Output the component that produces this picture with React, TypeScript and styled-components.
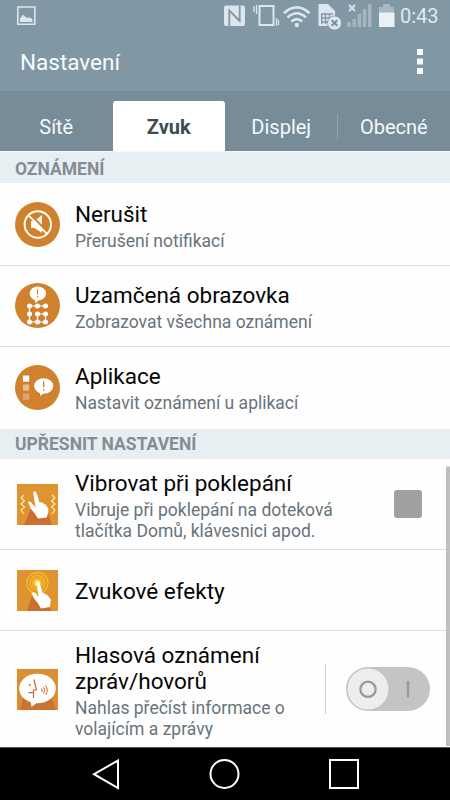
import React from 'react';
import styled, { createGlobalStyle } from 'styled-components';

const GlobalStyle = createGlobalStyle`
  * { box-sizing: border-box; }
  body { margin: 0; background: #fff; font-family: Roboto, sans-serif; }
  svg { display: block; flex: none; }
`;

const Screen = styled.div`
  width: 450px; height: 800px; overflow: hidden;
  display: flex; flex-direction: column; background: #fefefe;
`;
const StatusBar = styled.header`
  height: 32px; flex: none; padding: 0 12px 0 16px; background: #8197a4;
  display: flex; align-items: center; justify-content: space-between;
`;
const StatusIcons = styled.div`
  display: flex; align-items: center; height: 32px;
`;
const Clock = styled.span`
  width: 38px; font-size: 20px; line-height: 32px; color: #e0e9ee; white-space: nowrap;
`;
const TitleBar = styled.div`
  height: 59px; flex: none; padding: 0 26px 0 20px; background: #8197a4;
  display: flex; align-items: center; justify-content: space-between;
`;
const Title = styled.h1`
  margin: 0; font-size: 22.5px; line-height: 30px; font-weight: 400; color: #f7fcfe;
`;
const MenuButton = styled.button`
  border: 0; padding: 0; background: none; height: 30px;
`;
const Tabs = styled.nav`
  height: 61px; flex: none; padding-top: 10px; background: #778c96;
  border-bottom: 1px solid #f7fafb; display: grid; grid-template-columns: 112.5px 112.5px 112.5px 112.5px;
`;
const Tab = styled.div<{ $active?: boolean; $divided?: boolean }>`
  position: relative; height: 50px; border-radius: 3px 3px 0 0; padding-top: 1px;
  background: ${p => (p.$active ? '#fff' : 'transparent')};
  color: ${p => (p.$active ? '#3e4c56' : '#f3f9fb')};
  font-size: 20px; font-weight: ${p => (p.$active ? 700 : 400)};
  display: flex; align-items: center; justify-content: center;
  &::before {
    content: ''; display: ${p => (p.$divided ? 'block' : 'none')};
    position: absolute; left: -1px; top: 13px; width: 1px; height: 25px; background: #94a5ad;
  }
`;
const SectionHeader = styled.h2<{ $height: number; $inset: number }>`
  height: ${p => p.$height}px; flex: none; margin: 0; padding: ${p => p.$inset}px 0 0 15px; background: #e8eff3;
  font-size: 17.5px; line-height: 20px; font-weight: 700; color: #858c94;
`;
const Row = styled.section<{ $height: number; $last?: boolean }>`
  height: ${p => p.$height}px; flex: none; display: flex; align-items: center;
  border-bottom: ${p => (p.$last ? '0' : '1px solid #dadcdd')};
`;
const IconSlot = styled.div<{ $lift?: number }>`
  width: 75px; flex: none; display: flex; justify-content: center; padding-bottom: ${p => p.$lift ?? 0}px;
`;
const Copy = styled.div<{ $shift?: number }>`
  flex: 1; white-space: nowrap; padding-top: ${p => p.$shift ?? 0}px;
`;
const Name = styled.div`
  font-size: 22.5px; line-height: 26px; color: #060606;
`;
const Detail = styled.div`
  margin-top: 4px; font-size: 17.5px; line-height: 21px; color: #68737b;
`;
const Checkbox = styled.div`
  width: 28px; height: 28px; margin-right: 28px; border-radius: 3px; background: #a0a0a0;
`;
const SwitchArea = styled.div`
  height: 50px; width: 125px; border-left: 1px solid #cfcfcf; padding-left: 20px;
  display: flex; align-items: center;
`;
const Body = styled.main`
  position: relative; height: 595px; flex: none; overflow: hidden;
`;
const Scrollbar = styled.div`
  position: absolute; right: 0; top: 314px; bottom: 1px; width: 4px; border-radius: 2px 2px 0 0; background: #bfbfbf;
`;
const NavBar = styled.footer`
  height: 53px; flex: none; background: #000; border-top: 1px solid #555;
  display: flex; justify-content: center; align-items: center; gap: 87px; padding-right: 1px;
`;

const PictureIcon = () => (
  <svg width="20" height="20" viewBox="0 0 20 20">
    <path d="M1.8 1H18.8V18.2H1.8Z" fill="none" stroke="#dbe6ed" strokeWidth="1.6" />
    <path d="M4 16V12.5Q4.2 11.2 5.5 11.2Q5.8 9 7.2 9Q8.7 9 9.3 11Q10.8 10.9 11 12Q12.5 10.6 14 11.7Q16.5 12 16.5 14V16Z" fill="#dbe6ed" />
  </svg>
);

const SystemIcons = () => (
  <svg width="178" height="32" viewBox="222 0 178 32" fill="none" stroke="#dbe6ed">
    <path fill="#dbe6ed" stroke="none" d="M226 5.5H243Q245 5.5 245 7.5V24Q245 26 243 26H226Q224 26 224 24V7.5Q224 5.5 226 5.5Z" />
    <path d="M229.3 26V10.5L239.7 21V5.5" stroke="#8197a4" strokeWidth="1.8" />
    <path d="M259.5 6H273.5V25H259.5Z" strokeWidth="2" />
    <path d="M254 6V12M256.5 5V14M276.5 18V26M278.5 20V25" strokeWidth="1.3" />
    <path d="M284 13.2Q296.8 1.5 309.5 13.2M287.5 17.5Q296.8 9 306 17.5M291.3 21.5Q296.8 16.7 302.2 21.5" strokeWidth="2.6" />
    <circle cx="296.8" cy="25" r="2.2" fill="#dbe6ed" stroke="none" />
    <path d="M318.5 4H328L335 11V26H318.5Z" fill="#dbe6ed" stroke="none" />
    <path d="M321.5 14H333M321.5 18H333M321.5 22H329M321.7 13.5V24M325.5 14V24M329.5 14V24" stroke="#8197a4" strokeWidth="1.3" />
    <circle cx="334.5" cy="23" r="7" fill="#dbe6ed" stroke="#8197a4" strokeWidth="0.8" />
    <path d="M331.7 20.2L337.3 25.8M337.3 20.2L331.7 25.8" stroke="#778d99" strokeWidth="2" />
    <path d="M349 5L355 11M355 5L349 11" strokeWidth="1.8" />
    <path d="M349 22V27M354.2 19V27M359.4 14V27M364.6 9V27M369.8 4V27" stroke="#a4b5bf" strokeWidth="3.6" />
    <path d="M383 4H390V7H394V13H379V7H383Z" fill="#a7b8c2" stroke="none" />
    <path d="M379 12.5H394.5V27H379Z" fill="#e9f1f5" stroke="none" />
  </svg>
);

const MuteIcon = () => (
  <svg width="45" height="45" viewBox="0.5 0.5 45 45" fill="none" stroke="#fffdf8">
    <circle cx="23" cy="23" r="22.5" fill="#cf812d" stroke="none" />
    <path d="M16.5 19.5H20L27.5 13.5V31.5L20 26.5H16.5Z" fill="#fffdf8" stroke="none" />
    <path d="M15.8 13L33.5 30.7" stroke="#cf812d" strokeWidth="2" />
    <circle cx="23.3" cy="23" r="13.2" strokeWidth="2" />
    <path d="M14 13.8L32.5 32.3" strokeWidth="1.8" />
  </svg>
);
const LockIcon = () => (
  <svg width="45" height="45" viewBox="0.5 0.5 45 45">
    <circle cx="23" cy="23" r="22.5" fill="#cf812d" />
    <path d="M20 17L21 20.5L26 16Z" fill="#fff" />
    <ellipse cx="23.3" cy="11" rx="8.2" ry="7.1" fill="#fff" />
    <path d="M23 6.7V12.3M23 13.6V15" stroke="#cf812d" strokeWidth="1.2" />
    <path d="M31 23.5H15V39.5H23V31.5H31V39.5H23" fill="none" stroke="#fff" strokeWidth="1.2" />
    {[15, 23, 31].map(x => [23.5, 31.5, 39.5].map(y => <circle key={`${x}-${y}`} cx={x} cy={y} r="2.5" fill="#fff" />))}
  </svg>
);
const AppsIcon = () => (
  <svg width="45" height="45" viewBox="0.5 0.5 45 45">
    <circle cx="23" cy="23" r="22.5" fill="#cf812d" />
    <path d="M8.5 11H14.7V17.2H8.5Z" fill="#fff" />
    <path d="M8.5 20H14.7V26.2H8.5Z" fill="#e9bd8c" />
    <path d="M8.5 29H14.7V35.2H8.5Z" fill="#dfa66c" />
    <path d="M25 27L26 31.5L31 27Z" fill="#fff" />
    <ellipse cx="29.2" cy="21.5" rx="9.6" ry="7.7" fill="#fff" />
    <path d="M29.2 16.8V23M29.2 24.5V26" stroke="#cf812d" strokeWidth="1.3" />
  </svg>
);
const TapIcon = ({ vibrate }: { vibrate?: boolean }) => (
  <svg width="41" height="41" viewBox="0 0 41 41">
    <path d="M0 0H41V41H0Z" fill="#df9431" />
    {vibrate ? (
      <>
        <path d="M7 41L14 24L31 29L35 41Z" fill="#c97031" />
        <path d="M7 11L4 14L7.5 17L4 20L7.5 23L4 26L7 30M35 11L38 14L34.5 17L38 20L34.5 23L38 26L35 30" fill="none" stroke="#fff2b0" strokeWidth="1.1" />
        <path d="M11 18Q12.5 16.8 14.5 18.8L18.5 23.5L16.3 9.5Q16 7.3 17.5 7.2Q19 7.1 19.6 9L22.5 18.5Q25.5 17.5 27 20Q29.3 20 30.3 23Q32 25 31 29L29.8 33.5L21 34.5Q18 29 14 25Z" fill="#fff" />
      </>
    ) : (
      <>
        <path d="M10 41L15 26L33 35L34 41Z" fill="#c97031" />
        <circle cx="20.5" cy="13" r="6" fill="#f0b32b" />
        <g fill="none" stroke="#f4bd20" strokeWidth="1.3"><circle cx="20.5" cy="13" r="7.5" /><circle cx="20.5" cy="13" r="10.5" /></g>
        <circle cx="20.5" cy="13" r="3" fill="#ffe66a" />
        <path d="M14.5 23Q16.5 21.2 18.5 23.5L21.5 27L19.8 14Q19.7 12 21 12Q22.5 12 23 14L25.5 23Q28 22.5 29 24.5Q31.3 25 32 27.5Q34.5 29 33.5 32L33 37L24 38.5Q21 32.5 17 28.5Z" fill="#fff" />
      </>
    )}
  </svg>
);
const SpeechIcon = () => (
  <svg width="41" height="41" viewBox="0 0 41 41">
    <path d="M0 0H41V41H0Z" fill="#dc8e31" />
    <path d="M3 41L7 26H34L39 41Z" fill="#c97431" />
    <path d="M13.5 31L14.5 38L22 32Z" fill="#fff" />
    <ellipse cx="20.5" cy="19.5" rx="18.3" ry="14.8" fill="#fff" />
    <path d="M17 10.5L19.5 21H16.5V29M11.5 23.7H16.5" fill="none" stroke="#c96a32" strokeWidth="1.2" />
    <circle cx="12.8" cy="16" r="0.9" fill="#c96a32" />
    <path d="M24.5 19.5Q26 21 24.5 23M26.5 18Q29 21 26.5 24.5M28.5 16.5Q32 21 28.5 26" fill="none" stroke="#c96a32" strokeWidth="1" />
  </svg>
);
const Toggle = () => (
  <svg width="84" height="44" viewBox="0 0 84 44">
    <rect width="84" height="44" rx="22" fill="#c4c4c4" />
    <circle cx="22" cy="22" r="20.5" fill="#ededed" />
    <circle cx="22" cy="22.3" r="7.6" fill="none" stroke="#999" strokeWidth="2.3" />
    <path d="M62 14V30.5" stroke="#999" strokeWidth="2.4" />
  </svg>
);

export default function App() {
  return (
    <Screen>
      <GlobalStyle />
      <StatusBar>
        <PictureIcon />
        <StatusIcons><SystemIcons /><Clock>0:43</Clock></StatusIcons>
      </StatusBar>
      <TitleBar>
        <Title>Nastavení</Title>
        <MenuButton aria-label="Menu">
          <svg width="8" height="28" fill="#f4fafc"><path d="M1 1h6v6H1zM1 10.5h6v6H1zM1 20h6v6H1z" /></svg>
        </MenuButton>
      </TitleBar>
      <Tabs>
        <Tab>Sítě</Tab>
        <Tab $active>Zvuk</Tab>
        <Tab>Displej</Tab>
        <Tab $divided>Obecné</Tab>
      </Tabs>
      <Body>
        <SectionHeader $height={31} $inset={7}>OZNÁMENÍ</SectionHeader>
        <Row $height={83}>
          <IconSlot><MuteIcon /></IconSlot>
          <Copy $shift={5}><Name>Nerušit</Name><Detail>Přerušení notifikací</Detail></Copy>
        </Row>
        <Row $height={81}>
          <IconSlot $lift={1}><LockIcon /></IconSlot>
          <Copy $shift={3}><Name>Uzamčená obrazovka</Name><Detail>Zobrazovat všechna oznámení</Detail></Copy>
        </Row>
        <Row $height={82} $last>
          <IconSlot $lift={1}><AppsIcon /></IconSlot>
          <Copy $shift={1}><Name>Aplikace</Name><Detail>Nastavit oznámení u aplikací</Detail></Copy>
        </Row>
        <SectionHeader $height={30} $inset={5}>UPŘESNIT NASTAVENÍ</SectionHeader>
        <Row $height={91}>
          <IconSlot><TapIcon vibrate /></IconSlot>
          <Copy $shift={4}><Name>Vibrovat při poklepání</Name><Detail>Vibruje při poklepání na doteková<br />tlačítka Domů, klávesnici apod.</Detail></Copy>
          <Checkbox role="checkbox" aria-checked={false} />
        </Row>
        <Row $height={81}>
          <IconSlot><TapIcon /></IconSlot>
          <Copy $shift={2}><Name>Zvukové efekty</Name></Copy>
        </Row>
        <Row $height={116} $last>
          <IconSlot><SpeechIcon /></IconSlot>
          <Copy $shift={3}><Name>Hlasová oznámení<br />zpráv/hovorů</Name><Detail>Nahlas přečíst informace o<br />volajícím a zprávy</Detail></Copy>
          <SwitchArea><Toggle /></SwitchArea>
        </Row>
        <Scrollbar />
      </Body>
      <NavBar>
        <svg width="32" height="34" viewBox="0 0 32 34"><path d="M28 3.5V31L4 17.2Z" fill="none" stroke="#fff" strokeWidth="2" /></svg>
        <svg width="32" height="34" viewBox="0 0 32 34"><circle cx="15.5" cy="17" r="14" fill="none" stroke="#fff" strokeWidth="2" /></svg>
        <svg width="32" height="34" viewBox="0 0 32 34"><path d="M2 3H30V31H2Z" fill="none" stroke="#fff" strokeWidth="2" /></svg>
      </NavBar>
    </Screen>
  );
}
